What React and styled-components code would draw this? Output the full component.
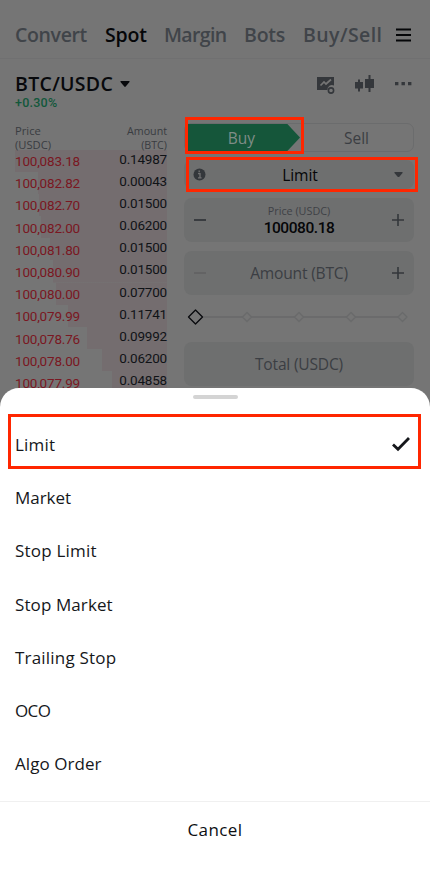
import { useState } from "react";
import styled, { createGlobalStyle } from "styled-components";

const GlobalStyle = createGlobalStyle`
  * {
    box-sizing: border-box;
  }
  body {
    margin: 0;
    background: #757575;
    font-family: "Open Sans", "Noto Sans", sans-serif;
    color: #0c0e12;
  }
  button {
    font: inherit;
    color: inherit;
    background: none;
    border: none;
    padding: 0;
  }
`;

const Screen = styled.div`
  position: relative;
  width: 430px;
  height: 885px;
  overflow: hidden;
  background: #757575;
`;
const NavBar = styled.nav`
  display: flex;
  align-items: center;
  height: 59px;
  padding: 11px 18px 0 15px;
  border-bottom: 1px solid #707071;
`;
const NavItem = styled.button`
  width: ${(p) => p.$w}px;
  text-align: left;
  white-space: nowrap;
  font-size: 19.5px;
  font-weight: 600;
  letter-spacing: ${(p) => p.$ls || 0}px;
  color: ${(p) => (p.$active ? "#050608" : "#404449")};
`;
const MenuIcon = styled.svg`
  margin-left: auto;
  margin-right: 1px;
`;
const PairBar = styled.header`
  display: flex;
  justify-content: space-between;
  height: 58px;
  padding: 14px 18px 0 15px;
`;
const Pair = styled.div`
  display: flex;
  align-items: center;
  gap: 7px;
  height: 22px;
  font-size: 19.5px;
  font-weight: 600;
  line-height: 22px;
  letter-spacing: 0.3px;
  color: #08090c;
`;
const Change = styled.div`
  font-family: Roboto, sans-serif;
  font-size: 12.5px;
  font-weight: 500;
  line-height: 14px;
  letter-spacing: 0.25px;
  margin-top: 1px;
  color: #12583b;
`;
const Tools = styled.div`
  display: flex;
  align-items: flex-start;
`;
const Content = styled.main`
  display: grid;
  grid-template-columns: 152px 230px;
  column-gap: 17px;
  padding-left: 15px;
`;
const BookHead = styled.div`
  display: flex;
  justify-content: space-between;
  height: 32.5px;
  padding-top: 7px;
  font-size: 11.2px;
  line-height: 14px;
  color: #393c41;
  div:last-child {
    text-align: right;
    font-size: 10.7px;
  }
`;
const BookRow = styled.div`
  display: flex;
  justify-content: space-between;
  height: 22.2px;
  line-height: 20px;
  font-family: Roboto, sans-serif;
  font-size: 13.5px;
  letter-spacing: -0.2px;
  background: linear-gradient(#746d6f, #746d6f) no-repeat right /
    ${(p) => p.$depth}px 100%;
`;
const Price = styled.span`
  padding-top: 1.5px;
  color: #7a1722;
`;
const Amount = styled.span`
  margin-top: -1px;
  color: #101317;
`;
const Form = styled.section`
  padding-top: 6px;
`;
const Sides = styled.div`
  position: relative;
  display: flex;
  height: 29px;
  border: 1px solid #6b6c6d;
  border-radius: 7px;
  font-size: 15.5px;
`;
const Side = styled.button`
  display: flex;
  align-items: center;
  justify-content: center;
  height: 27px;
  padding-top: 1px;
  font-weight: 500;
`;
const BuySide = styled(Side)`
  width: 115px;
  padding-right: 2px;
  color: #7f8d87;
  background: #15563a;
  clip-path: polygon(0 0, 89% 0, 100% 50%, 89% 100%, 0 100%);
`;
const SellSide = styled(Side)`
  flex: 1;
  color: #3b3e43;
`;
const Field = styled.div`
  position: relative;
  display: flex;
  align-items: center;
  justify-content: space-between;
  height: ${(p) => p.$h || 44}px;
  margin-top: ${(p) => p.$mt || 9}px;
  padding: 0 ${(p) => p.$pr || 9}px 0 9px;
  border-radius: 8px;
  background: #6e6f6f;
`;
const FieldText = styled.div`
  flex: 1;
  text-align: center;
  font-size: 15.6px;
  font-weight: ${(p) => (p.$strong ? 500 : 450)};
  letter-spacing: ${(p) => p.$ls || 0}px;
  color: ${(p) => (p.$strong ? "#050608" : "#3b3e43")};
`;
const FieldLabel = styled.div`
  font-size: 10.8px;
  font-weight: 400;
  line-height: 15px;
  color: #3e4146;
`;
const FieldValue = styled.div`
  font-family: Roboto, sans-serif;
  font-size: 15.5px;
  font-weight: 500;
  line-height: 18px;
  letter-spacing: -0.45px;
  margin-top: 1px;
  color: #050608;
`;
const SliderSvg = styled.svg`
  display: block;
  margin: 12px 0 0 2px;
`;
// red annotation frame drawn over the element it belongs to
const Highlight = styled.div`
  position: absolute;
  top: ${(p) => p.$t}px;
  left: ${(p) => p.$l}px;
  width: ${(p) => p.$w}px;
  height: ${(p) => p.$h}px;
  border: 3px solid #ff2600;
  pointer-events: none;
`;
const Sheet = styled.section`
  position: absolute;
  left: 0;
  right: 0;
  bottom: 0;
  height: 497px;
  padding-top: 7px;
  border-radius: 19px 19px 0 0;
  background: #fff;
`;
const Handle = styled.div`
  width: 45px;
  height: 4px;
  margin: 0 auto 18px;
  border-radius: 2px;
  background: #d4d4d4;
`;
const Option = styled.button`
  position: relative;
  display: flex;
  align-items: center;
  justify-content: space-between;
  width: 100%;
  height: 53.3px;
  padding: 1px 19px 0 15px;
  font-size: 17px;
  font-weight: 450;
  letter-spacing: ${(p) => p.$ls}px;
  color: #15171b;
`;
const Cancel = styled.button`
  width: 100%;
  height: 60px;
  margin-top: 11px;
  padding-bottom: 4px;
  border-top: 1px solid #f0f0f0;
  font-size: 17px;
  font-weight: 450;
  letter-spacing: 0.4px;
`;

const asks = [
  ["100,083.18", "0.14987", 152],
  ["100,082.82", "0.00043", 129],
  ["100,082.70", "0.01500", 128],
  ["100,082.00", "0.06200", 126],
  ["100,081.80", "0.01500", 117],
  ["100,080.90", "0.01500", 114],
  ["100,080.00", "0.07700", 111],
  ["100,079.99", "0.11741", 99],
  ["100,078.76", "0.09992", 80],
  ["100,078.00", "0.06200", 65],
  ["100,077.99", "0.04858", 55],
];

// label and letter spacing
const options = [
  ["Limit", 0.2],
  ["Market", -0.05],
  ["Stop Limit", 0.2],
  ["Stop Market", 0.1],
  ["Trailing Stop", 0.2],
  ["OCO", -0.6],
  ["Algo Order", 0.05],
];

const Caret = ({ w, h, color }) => (
  <svg width={w} height={h} viewBox="0 0 10 6">
    <path d="M1 0h8q1 0 .5 1L5.7 5.5q-.7.8-1.4 0L.5 1Q0 0 1 0z" fill={color} />
  </svg>
);

const Minus = ({ color = "#34373b" }) => (
  <svg width="14" height="14">
    <path d="M1 7h12" stroke={color} strokeWidth="1.8" />
  </svg>
);

const Plus = () => (
  <svg width="14" height="14">
    <path d="M1 7h12M7 1v12" stroke="#34373b" strokeWidth="1.6" />
  </svg>
);

const Slider = () => (
  <SliderSvg width="226" height="20" fill="#757575">
    <path d="M17 10h201" stroke="#68696a" strokeWidth="1.3" />
    {[61, 113, 165, 216.5].map((x) => (
      <path
        key={x}
        d={`M${x - 4.5} 10l4.5-4.5 4.5 4.5-4.5 4.5z`}
        stroke="#696a6b"
        strokeWidth="1.2"
        strokeLinejoin="round"
      />
    ))}
    <path
      d="M2.5 10l7-7 7 7-7 7z"
      stroke="#090a0d"
      strokeWidth="1.3"
      strokeLinejoin="round"
    />
  </SliderSvg>
);

const App = () => {
  const [type, setType] = useState("Limit");
  return (
    <Screen>
      <GlobalStyle />
      <NavBar>
        <NavItem $w={90} $ls={-0.35}>
          Convert
        </NavItem>
        <NavItem $w={59} $ls={-0.2} $active>
          Spot
        </NavItem>
        <NavItem $w={80} $ls={-0.65}>
          Margin
        </NavItem>
        <NavItem $w={59} $ls={-0.2}>
          Bots
        </NavItem>
        <NavItem $w={80} $ls={0.4}>
          Buy/Sell
        </NavItem>
        <MenuIcon width="15" height="14">
          <path d="M0 1.5h15M0 7h15M0 12.5h15" stroke="#050608" strokeWidth="2.2" />
        </MenuIcon>
      </NavBar>
      <PairBar>
        <div>
          <Pair>
            BTC/USDC <Caret w={10} h={6} color="#08090c" />
          </Pair>
          <Change>+0.30%</Change>
        </div>
        <Tools>
          <svg width="96" height="22" viewBox="316 73 96 22" fill="#34373b">
            <path d="M317 77h17v8.5a4.5 4.5 0 0 0-6.5 4.5h-10.5z" />
            <path
              d="M320.500 85.500l3.500-3.500 2 2 5-4.500"
              fill="none"
              stroke="#757575"
              strokeWidth="1.7"
            />
            <circle cx="331" cy="90.5" r="2.6" fill="none" stroke="#34373b" strokeWidth="1.6" />
            <path d="M355 82h3v-2.5h2v2.5h3v6.5h-3v3h-2v-3h-3zM365 79h3.5v-4h2v4h3.500v9h-3.500v4h-2v-4h-3.500z" />
            <path d="M395 82h3.4v3.3h-3.4zM401.5 82h3.4v3.3h-3.4zM408 82h3.4v3.3h-3.4z" />
          </svg>
        </Tools>
      </PairBar>
      <Content>
        <section>
          <BookHead>
            <div>
              Price
              <br />
              (USDC)
            </div>
            <div>
              Amount
              <br />
              (BTC)
            </div>
          </BookHead>
          {asks.map(([price, amount, depth]) => (
            <BookRow key={price} $depth={depth}>
              <Price>{price}</Price>
              <Amount>{amount}</Amount>
            </BookRow>
          ))}
        </section>
        <Form>
          <Sides>
            <BuySide>Buy</BuySide>
            <SellSide>Sell</SellSide>
            <Highlight $t={-7} $l={0} $w={119} $h={37} />
          </Sides>
          <Field $h={29} $mt={8} $pr={11}>
            <svg width="13" height="13">
              <circle cx="6.5" cy="6.5" r="6" fill="#34373b" />
              <path d="M5 5.6h2v4M5 9.8h3.6M6.2 2.6v1.7" stroke="#717172" strokeWidth="1.3" fill="none" />
            </svg>
            <FieldText $strong $ls={-0.1}>
              {type}
            </FieldText>
            <Caret w={9} h={5.5} color="#34373b" />
            <Highlight $t={-3} $l={2} $w={232} $h={35} />
          </Field>
          <Field>
            <Minus />
            <FieldText>
              <FieldLabel>Price (USDC)</FieldLabel>
              <FieldValue>100080.18</FieldValue>
            </FieldText>
            <Plus />
          </Field>
          <Field>
            <Minus color="#626364" />
            <FieldText $ls={-0.2}>Amount (BTC)</FieldText>
            <Plus />
          </Field>
          <Slider />
          <Field $mt={15}>
            <FieldText $ls={-0.2}>Total (USDC)</FieldText>
          </Field>
        </Form>
      </Content>
      <Sheet>
        <Handle />
        {options.map(([name, ls]) => (
          <Option key={name} $ls={ls} onClick={() => setType(name)}>
            {name}
            {name === type && (
              <>
                <svg width="20" height="16">
                  <path d="M2 8.5l5 4.8L18 2" fill="none" stroke="#15171b" strokeWidth="2.8" />
                </svg>
                <Highlight $t={-3} $l={8} $w={413} $h={55} />
              </>
            )}
          </Option>
        ))}
        <Cancel>Cancel</Cancel>
      </Sheet>
    </Screen>
  );
};

export default App;
